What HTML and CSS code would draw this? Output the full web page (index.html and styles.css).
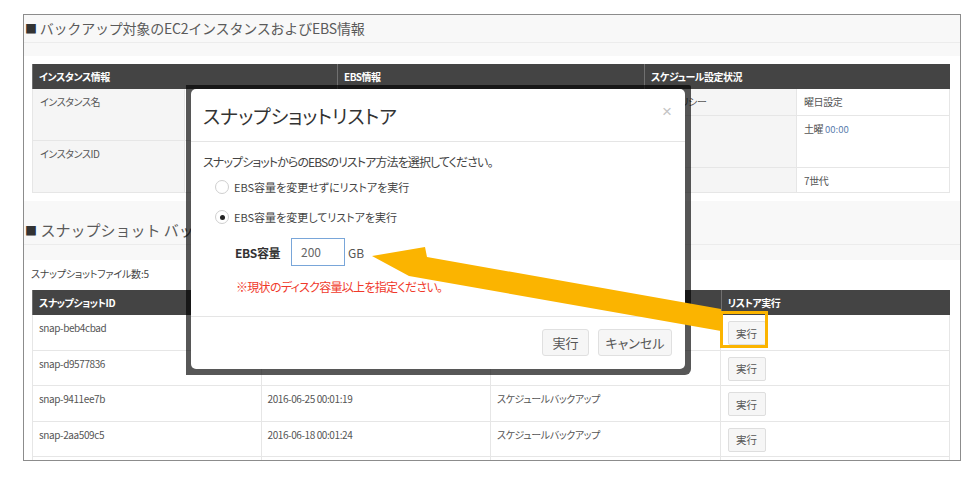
FILE: index.html
```html
<!DOCTYPE html>
<html lang="ja">
<head>
<meta charset="utf-8">
<title>スナップショットリストア</title>
<link rel="stylesheet" href="styles.css">
</head>
<body>
<div class="page">
  <div class="panel">
    <section class="sec">
      <div class="sec-head"><span class="sq">■</span> バックアップ対象のEC2インスタンスおよびEBS情報</div>
      <div class="sec-band"></div>
      <div class="sec-body">
        <div class="info">
          <div class="col">
            <div class="th">インスタンス情報</div>
            <div class="kv">
              <div class="k r52">インスタンス名</div><div class="v r52"></div>
              <div class="k r52">インスタンスID</div><div class="v r52"></div>
            </div>
          </div>
          <div class="col">
            <div class="th">EBS情報</div>
            <div class="kv">
              <div class="k r27"></div><div class="v r27"></div>
              <div class="k r52"></div><div class="v r52"></div>
              <div class="k r25"></div><div class="v r25"></div>
            </div>
          </div>
          <div class="col">
            <div class="th">スケジュール設定状況</div>
            <div class="kv">
              <div class="k r27">実行ポリシー</div><div class="v r27">曜日設定</div>
              <div class="k r52"></div><div class="v r52">土曜 <span class="num">00:00</span></div>
              <div class="k r25"></div><div class="v r25">7世代</div>
            </div>
          </div>
        </div>
      </div>
    </section>

    <section class="sec sec2">
      <div class="sec-head"><span class="sq">■</span> スナップショット バックア</div>
      <div class="sec-band"></div>
      <div class="sec-body">
        <div class="count">スナップショットファイル数:5</div>
        <div class="snap">
          <div class="th">スナップショットID</div>
          <div class="th"></div>
          <div class="th"></div>
          <div class="th">リストア実行</div>

          <div class="c">snap-beb4cbad</div><div class="c"></div><div class="c"></div><div class="c"><button class="btn">実行</button></div>
          <div class="c">snap-d9577836</div><div class="c"></div><div class="c"></div><div class="c"><button class="btn">実行</button></div>
          <div class="c">snap-9411ee7b</div><div class="c">2016-06-25 00:01:19</div><div class="c">スケジュールバックアップ</div><div class="c"><button class="btn">実行</button></div>
          <div class="c">snap-2aa509c5</div><div class="c">2016-06-18 00:01:24</div><div class="c">スケジュールバックアップ</div><div class="c"><button class="btn">実行</button></div>
          <div class="c"></div><div class="c"></div><div class="c"></div><div class="c"></div>
        </div>
      </div>
    </section>
  </div>
</div>

<div class="modal-frame">
  <div class="modal">
    <div class="m-head">
      <div class="m-title">スナップショットリストア</div>
      <div class="m-close">×</div>
    </div>
    <div class="m-body">
      <div class="m-intro">スナップショットからのEBSのリストア方法を選択してください。</div>
      <div class="m-radio r1"><span class="radio"></span>EBS容量を変更せずにリストアを実行</div>
      <div class="m-radio r2"><span class="radio on"></span>EBS容量を変更してリストアを実行</div>
      <div class="m-size">
        <span class="m-size-label">EBS容量</span>
        <span class="m-input">200</span>
        <span class="m-unit">GB</span>
      </div>
      <div class="m-note">※現状のディスク容量以上を指定ください。</div>
    </div>
    <div class="m-foot">
      <button class="mbtn run">実行</button>
      <button class="mbtn cancel">キャンセル</button>
    </div>
  </div>
</div>

<svg class="annot" width="980" height="480" viewBox="0 0 980 480">
  <polygon points="372,256 425,247 427,257 721,309 721,331 409,276" fill="#fbb400"/>
  <rect x="721.5" y="312.5" width="45" height="34" fill="none" stroke="#fbb400" stroke-width="3"/>
</svg>
</body>
</html>
```

FILE: styles.css
```css
html, body {
  margin: 0;
  padding: 0;
}
body {
  position: relative;
  width: 980px;
  height: 480px;
  overflow: hidden;
  background: #fff;
  font-family: "Noto Sans CJK JP", "Noto Sans", sans-serif;
  color: #555;
}
.page {
  padding: 14px 0 0 23px;
}
.panel {
  width: 938px;
  height: 447px;
  box-sizing: border-box;
  border: 1px solid #8c8c8c;
  overflow: hidden;
}
.sec-head {
  background: #f8f8f8;
  border-bottom: 1px solid #ececec;
  font-size: 14px;
  letter-spacing: -0.2px;
  line-height: 20px;
  padding: 3px 0 3px 1px;
  color: #5a5a5a;
  white-space: nowrap;
}
.sq {
  color: #333;
  font-size: 12px;
}
.sec-band {
  height: 13px;
  background: #f8f8f8;
}
.sec2 {
  margin-top: 8px;
}
.sec2 .sec-head {
  padding-top: 19px;
  font-size: 15px;
  letter-spacing: 0;
}
.sec2 .sec-band {
  height: 15px;
}
.sec-body {
  padding: 8px 10px 0 8px;
}
.sec2 .sec-body {
  padding-top: 0;
}
.info {
  display: grid;
  grid-template-columns: 305px 307px 306px;
}
.th {
  background: #444;
  color: #fff;
  font-weight: bold;
  font-size: 10px;
  letter-spacing: -0.5px;
  height: 25px;
  line-height: 25px;
  padding-left: 6px;
  border-left: 1px solid #707070;
  box-sizing: border-box;
  font-feature-settings: "palt";
  white-space: nowrap;
  overflow: hidden;
}
.kv {
  display: grid;
  grid-template-columns: 1fr 1fr;
}
.k, .v {
  box-sizing: border-box;
  font-size: 10px;
  letter-spacing: -0.4px;
  line-height: 14px;
  padding: 6px 7px;
  border-right: 1px solid #e6e6e6;
  border-bottom: 1px solid #e6e6e6;
  font-feature-settings: "palt";
  color: #555;
  white-space: nowrap;
}
.k {
  background: #f5f5f5;
  border-left: 1px solid #e6e6e6;
}
.v {
  background: #fff;
}
.r52 { height: 52px; }
.r27 { height: 27px; }
.r25 { height: 25px; }
.num {
  color: #5a7cae;
  font-size: 9.5px;
  letter-spacing: 0;
}
.count {
  font-size: 10px;
  letter-spacing: -0.2px;
  line-height: 16px;
  padding-top: 6px;
  margin-bottom: 8px;
  margin-left: -1px;
  color: #444;
  font-feature-settings: "palt";
}
.snap {
  display: grid;
  grid-template-columns: repeat(4, 229.5px);
  grid-template-rows: 25px;
  grid-auto-rows: 35.5px;
}
.c {
  box-sizing: border-box;
  font-size: 10px;
  letter-spacing: -0.4px;
  line-height: 14px;
  padding: 6px 6px;
  border-right: 1px solid #e6e6e6;
  border-bottom: 1px solid #e6e6e6;
  color: #555;
  font-feature-settings: "palt";
  white-space: nowrap;
  overflow: hidden;
}
.c:nth-child(4n+1) {
  border-left: 1px solid #e6e6e6;
}
.c:nth-child(4n) {
  padding: 6px 7px;
}
.btn {
  width: 38px;
  height: 24px;
  padding: 0;
  margin: 0;
  background: #f6f6f6;
  border: 1px solid #dedede;
  border-radius: 2px;
  font-family: inherit;
  font-size: 10.5px;
  color: #555;
}

/* modal */
.modal-frame {
  position: absolute;
  left: 186px;
  top: 85px;
  padding: 4px 6px 6px 5px;
  background: rgba(0, 0, 0, 0.66);
  border-radius: 0 2px 6px 0;
}
.modal {
  width: 494px;
  height: 280px;
  background: #fff;
  border-radius: 5px;
  overflow: hidden;
  color: #333;
  font-feature-settings: "palt";
}
.m-head {
  height: 52px;
  border-bottom: 1px solid #e5e5e5;
  display: flex;
  align-items: center;
  justify-content: space-between;
  padding: 0 13px 0 12px;
}
.m-title {
  font-size: 19px;
  color: #333;
}
.m-close {
  align-self: flex-start;
  margin-top: 13px;
  font-family: "Liberation Sans", sans-serif;
  font-size: 17px;
  line-height: 20px;
  color: #c4c4c4;
}
.m-body {
  height: 174px;
  box-sizing: border-box;
  padding: 11px 12px 0;
  font-size: 12px;
}
.m-intro {
  line-height: 18px;
  color: #444;
  letter-spacing: -0.9px;
}
.m-radio {
  display: flex;
  align-items: center;
  line-height: 18px;
  margin-left: 12px;
  color: #444;
  font-size: 11px;
}
.r1 { margin-top: 7px; }
.r2 { margin-top: 12px; }
.radio {
  width: 14px;
  height: 14px;
  box-sizing: border-box;
  border: 1px solid #cfcfcf;
  border-radius: 50%;
  margin-right: 5px;
  display: flex;
  align-items: center;
  justify-content: center;
  background: #fff;
}
.radio.on::after {
  content: "";
  width: 5px;
  height: 5px;
  border-radius: 50%;
  background: #222;
}
.m-size {
  display: flex;
  align-items: center;
  margin-top: 12px;
  margin-left: 32px;
  height: 28px;
}
.m-size-label {
  width: 56px;
  font-weight: bold;
  color: #333;
  letter-spacing: -0.3px;
}
.m-input {
  width: 54px;
  height: 28px;
  box-sizing: border-box;
  border: 1px solid #79a6d9;
  padding-left: 9px;
  line-height: 26px;
  color: #666;
}
.m-unit {
  margin-left: 3px;
  color: #555;
}
.m-note {
  margin-top: 12px;
  margin-left: 33px;
  line-height: 18px;
  color: #f0392b;
  letter-spacing: -0.7px;
}
.m-foot {
  border-top: 1px solid #e5e5e5;
  padding: 12px 13px 12px;
  display: flex;
  justify-content: flex-end;
  gap: 9px;
}
.mbtn {
  height: 27px;
  padding: 0;
  background: #f6f6f6;
  border: 1px solid #e0e0e0;
  border-radius: 3px;
  font-family: inherit;
  font-size: 13px;
  color: #555;
  font-feature-settings: "palt";
}
.mbtn.run { width: 47px; }
.mbtn.cancel { width: 74px; }

.annot {
  position: absolute;
  left: 0;
  top: 0;
  pointer-events: none;
}
```
